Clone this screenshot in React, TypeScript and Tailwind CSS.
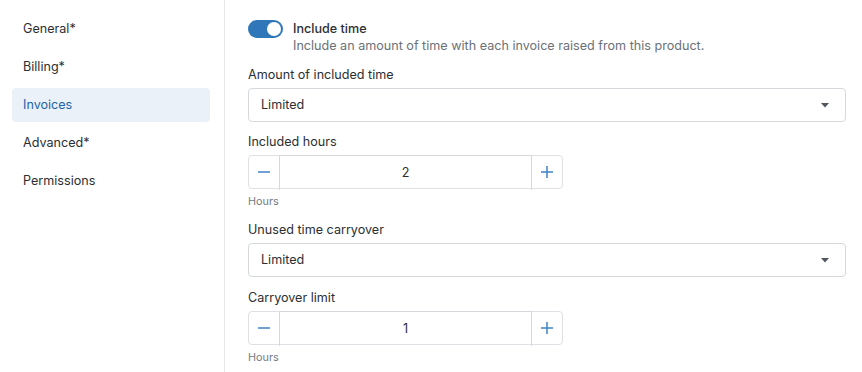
import { useState } from "react";

const navItems = [
  { label: "General*", active: false },
  { label: "Billing*", active: false },
  { label: "Invoices", active: true },
  { label: "Advanced*", active: false },
  { label: "Permissions", active: false },
];

function Caret() {
  return (
    <svg width="8" height="5" viewBox="0 0 8 5" className="text-[#50565c]">
      <path d="M0 0h8L4 4.5z" fill="currentColor" />
    </svg>
  );
}

function SelectBox({ value }: { value: string }) {
  return (
    <div className="flex h-[34px] w-[598px] items-center justify-between rounded-[4px] border border-[#d5d9de] bg-white pl-[12px] pr-[16px] text-[12.6px] text-[#2b2f33]">
      <span>{value}</span>
      <Caret />
    </div>
  );
}

function NumberBox({ value }: { value: number }) {
  return (
    <div className="flex h-[34px] w-[315px] rounded-[4px] border border-[#dde1e5] bg-white">
      <button className="flex w-[30px] items-center justify-center text-[#3f84c6]">
        <svg width="12" height="2" viewBox="0 0 12 2">
          <rect y="0.25" width="12" height="1.5" fill="currentColor" />
        </svg>
      </button>
      <div className="-mt-px -mb-[2px] flex flex-1 items-center justify-center border-x border-t border-[#d5d9de] text-[12.6px] text-[#2b2f33]">
        {value}
      </div>
      <button className="flex w-[30px] items-center justify-center text-[#3f84c6]">
        <svg width="12" height="12" viewBox="0 0 12 12">
          <rect x="5.25" width="1.5" height="12" fill="currentColor" />
          <rect y="5.25" width="12" height="1.5" fill="currentColor" />
        </svg>
      </button>
    </div>
  );
}

function Label({ children }: { children: React.ReactNode }) {
  return (
    <div className="mb-[4px] pt-px text-[12.6px] leading-[18px] text-[#2b2f33]">
      {children}
    </div>
  );
}

export default function App() {
  const [on, setOn] = useState(true);

  return (
    <div
      className="flex h-[372px] w-[862px] bg-white"
      style={{ fontFamily: "Inter, 'Noto Sans', sans-serif" }}
    >
      <nav className="flex w-[225px] shrink-0 flex-col gap-[4px] border-r border-[#e3e6ea] pl-[12px] pr-[14px] pt-[12px]">
        {navItems.map((item) => (
          <div
            key={item.label}
            className={`flex h-[34px] items-center rounded-[4px] px-[11px] text-[12.6px] ${
              item.active ? "bg-[#eaf1f8] text-[#1e65a7]" : "text-[#2b2f33]"
            }`}
          >
            {item.label}
          </div>
        ))}
      </nav>

      <main className="flex flex-col pl-[23px] pt-[20px]">
        <div className="flex gap-[10px]">
          <button
            onClick={() => setOn(!on)}
            className={`flex h-[18px] w-[35px] items-center rounded-full px-[2px] ${
              on ? "justify-end bg-[#2f77b8]" : "justify-start bg-gray-300"
            }`}
          >
            <span className="h-[14px] w-[14px] rounded-full bg-white" />
          </button>
          <div>
            <div className="text-[12.6px] font-medium leading-[17px] text-[#2b2f33]">
              Include time
            </div>
            <div className="text-[12.6px] leading-[17px] text-[#6b7177]">
              Include an amount of time with each invoice raised from this product.
            </div>
          </div>
        </div>

        <div className="mt-[11px]">
          <Label>Amount of included time</Label>
          <SelectBox value="Limited" />
        </div>

        <div className="mt-[10px]">
          <Label>Included hours</Label>
          <NumberBox value={2} />
          <div className="mt-[6px] text-[10.8px] leading-[14px] text-[#767c82]">Hours</div>
        </div>

        <div className="mt-[11px]">
          <Label>Unused time carryover</Label>
          <SelectBox value="Limited" />
        </div>

        <div className="mt-[11px]">
          <Label>Carryover limit</Label>
          <NumberBox value={1} />
          <div className="mt-[6px] text-[10.8px] leading-[14px] text-[#767c82]">Hours</div>
        </div>
      </main>
    </div>
  );
}
